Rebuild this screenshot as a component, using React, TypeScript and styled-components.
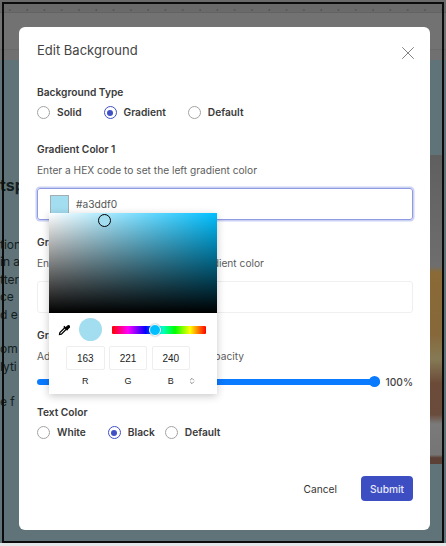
import styled, { createGlobalStyle } from 'styled-components'
import { X, ChevronsUpDown } from 'lucide-react'

const GlobalStyle = createGlobalStyle`
    html, body { margin: 0; padding: 0; }
    body { width: 446px; height: 546px; overflow: hidden; background: #e4e7e8; font-family: Inter, "Liberation Sans", sans-serif; }
`

const Page = styled.div`
    position: relative;
    width: 446px;
    height: 543px;
    overflow: hidden;
    display: flex;
    flex-direction: column;
    background: #5f7379;
`

const Outline = styled.div`
    position: absolute;
    inset: 2px 2px 0 2px;
    border: 2px solid #0c0c0c;
    pointer-events: none;
`

const HeaderTop = styled.div`
    height: 13px;
    box-sizing: border-box;
    background-color: #6a6a6a;
    background-image: radial-gradient(circle at 10px 10px, #565656 0.8px, transparent 1.2px);
    background-size: 17.3px 13px;
    border-bottom: 1px solid #636363;
`

const HeaderMiddle = styled.div`
    height: 37px;
    box-sizing: border-box;
    background: #727272;
    border-bottom: 1px solid #6a6a6a;
`

const HeaderBottom = styled.div`
    height: 10px;
    background: #707070;
`

const PageBody = styled.div`
    flex: 1;
    display: flex;
    justify-content: space-between;
`

const PageText = styled.div`
    width: 19px;
    overflow: hidden;
    padding-top: 116px;
    color: #14201f;
    font-size: 12px;
    line-height: 17.4px;
    white-space: nowrap;
`

const PageHeading = styled.div`
    font-size: 16px;
    font-weight: 700;
    line-height: 18px;
    margin-bottom: 42px;
`

const PageLine = styled.div<{ $gapAfter?: boolean }>`
    margin-bottom: ${({ $gapAfter }) => ($gapAfter ? '17.4px' : '0')};
`

const PagePhoto = styled.div`
    width: 13px;
    height: 309px;
    margin: 95px 3px 0 0;
    background: linear-gradient(
        180deg,
        #5f5f5f 0%,
        #6e6e6e 36%,
        #8a6a36 38%,
        #86683a 58%,
        #857a55 66%,
        #6b4a38 74%,
        #6a4c3c 84%,
        #7a7a7a 87%,
        #757575 97%,
        #5b4036 98%
    );
`

const Overlay = styled.div`
    position: absolute;
    inset: 0;
    padding: 27px 0 0 19px;
`

const Modal = styled.div`
    position: relative;
    width: 411px;
    height: 503px;
    box-sizing: border-box;
    background: #fff;
    border-radius: 6px;
    padding: 14px 17px 0 18px;
    color: #333;
`

const TitleRow = styled.div`
    display: flex;
    justify-content: space-between;
    align-items: flex-start;
    height: 18px;
    margin-bottom: 27px;
`

const Title = styled.h2`
    margin: 0;
    font-size: 13px;
    line-height: 18px;
    font-weight: 400;
    color: #444;
`

const CloseIcon = styled(X)`
    margin: 1px -6px 0 0;
    flex-shrink: 0;
`

const Section = styled.div<{ $after: number }>`
    margin-bottom: ${({ $after }) => $after}px;
`

const SectionLabel = styled.div`
    font-size: 10.2px;
    font-weight: 600;
    color: #3a3a3a;
    line-height: 12px;
`

const Hint = styled.div`
    font-size: 10.2px;
    color: #5c5c5c;
    line-height: 12px;
    margin-top: 9px;
`

const RadioRow = styled.div`
    display: flex;
    margin-top: 8px;
`

const RadioItem = styled.label<{ $after?: number }>`
    display: flex;
    align-items: center;
    gap: 7px;
    margin-right: ${({ $after }) => $after ?? 22}px;
    font-size: 10.2px;
    line-height: 13px;
    font-weight: 600;
    color: #3a3a3a;
`

const RadioDot = styled.span<{ $on?: boolean }>`
    width: 13px;
    height: 13px;
    box-sizing: border-box;
    border-radius: 50%;
    border: 1.25px solid ${({ $on }) => ($on ? '#3f51c5' : '#a3a3a3')};
    display: flex;
    align-items: center;
    justify-content: center;
    &::after {
        content: '';
        width: 6px;
        height: 6px;
        border-radius: 50%;
        background: ${({ $on }) => ($on ? '#3f51c5' : 'transparent')};
    }
`

const ColorInput = styled.div<{ $focus?: boolean }>`
    height: 32px;
    box-sizing: border-box;
    margin-top: 12px;
    border-radius: 3px;
    border: 1px solid ${({ $focus }) => ($focus ? '#8f9be0' : '#efefef')};
    box-shadow: ${({ $focus }) => ($focus ? '0 0 0 1.5px #ccd1f3' : 'none')};
    display: flex;
    align-items: center;
    padding-left: 12px;
    gap: 7px;
    font-size: 10.2px;
    color: #555;
`

const Swatch = styled.span`
    width: 19px;
    height: 19px;
    background: #a3ddf0;
    border: 1px solid #a2aeb2;
    box-sizing: border-box;
`

const SliderRow = styled.div`
    display: flex;
    align-items: center;
    gap: 6px;
    height: 13px;
    margin-top: 13px;
    font-size: 10.2px;
    font-weight: 500;
    color: #444;
`

const SliderTrack = styled.div`
    flex: 1;
    height: 6px;
    border-radius: 3px;
    background: #0a7aff;
    position: relative;
    &::after {
        content: '';
        position: absolute;
        right: 0;
        top: -2.5px;
        width: 11px;
        height: 11px;
        border-radius: 50%;
        background: #0a7aff;
    }
`

const Footer = styled.div`
    display: flex;
    justify-content: flex-end;
    align-items: center;
    gap: 24px;
    margin-top: 37px;
`

const CancelButton = styled.button`
    border: 0;
    background: none;
    padding: 0;
    font: 400 10.2px Inter, sans-serif;
    color: #333;
`

const SubmitButton = styled.button`
    width: 52px;
    height: 25px;
    padding: 0;
    border: 0;
    border-radius: 4px;
    background: #3d4ec2;
    color: #e8eafa;
    font: 500 10.2px Inter, sans-serif;
`

const Picker = styled.div`
    position: absolute;
    left: 30px;
    top: 186px;
    width: 168px;
    height: 181px;
    background: #fff;
    box-shadow: 0 2px 8px rgba(0, 0, 0, 0.22);
    font-family: "Liberation Sans", Arial, sans-serif;
`

const Saturation = styled.div`
    height: 100px;
    position: relative;
    background:
        linear-gradient(to top, #000, transparent),
        linear-gradient(to right, #fff, #00bfff);
`

const SatHandle = styled.span`
    position: absolute;
    left: 49px;
    top: 1px;
    width: 13px;
    height: 13px;
    box-sizing: border-box;
    border-radius: 50%;
    border: 1.5px solid #000;
    background: #a3ddf0;
`

const Controls = styled.div`
    display: flex;
    align-items: center;
    padding: 5px 11px 0 9px;
`

const Preview = styled.span`
    width: 23px;
    height: 23px;
    flex-shrink: 0;
    border-radius: 50%;
    background: #a3ddf0;
    margin: 0 10px 0 9px;
`

const Hue = styled.div`
    flex: 1;
    height: 8px;
    border-radius: 1px;
    position: relative;
    background: linear-gradient(to right, #f00, #f0f 17%, #00f 36%, #0ff 50%, #0f0 67%, #ff0 83%, #f00);
`

const HueHandle = styled.span`
    position: absolute;
    left: 37px;
    top: -2px;
    width: 12px;
    height: 12px;
    box-sizing: border-box;
    border-radius: 50%;
    border: 1px solid #fff;
    box-shadow: 0 0 2px rgba(0, 0, 0, 0.4);
    background: #00bfff;
`

const Fields = styled.div`
    display: grid;
    grid-template-columns: repeat(3, 38.5px);
    gap: 4.25px;
    padding: 5px 0 0 17px;
`

const Field = styled.div`
    height: 24px;
    box-sizing: border-box;
    border: 1px solid #eee;
    border-radius: 2px;
    display: flex;
    align-items: center;
    justify-content: center;
    font-size: 10px;
    color: #222;
`

const FieldLabels = styled(Fields)`
    grid-template-columns: repeat(3, 38.5px) 8px;
    align-items: center;
`

const FieldLabel = styled.div`
    font-size: 9px;
    line-height: 12px;
    color: #222;
    text-align: center;
`

const UnfoldIcon = styled(ChevronsUpDown)`
    margin-left: -6px;
`

const Eyedropper = () => (
    <svg width="12" height="12" viewBox="0 0 16 16" fill="none" stroke="#000" strokeWidth="1.6" style={{ flexShrink: 0 }}>
        <path d="M9 5 2.5 11.5 2 14l2.5-.5L11 7" fill="#fff" />
        <path d="M7.8 3.2l5 5" strokeWidth="2" />
        <path d="M10.5 5 13 2.5a1.4 1.4 0 0 1 2 2L12.5 7z" fill="#000" />
    </svg>
)

export default function App() {
    return (
        <>
            <GlobalStyle />
            <Page>
                <HeaderTop />
                <HeaderMiddle />
                <HeaderBottom />
                <PageBody>
                    <PageText>
                        <PageHeading>tsp</PageHeading>
                        <PageLine>tion</PageLine>
                        <PageLine>in a</PageLine>
                        <PageLine>tter</PageLine>
                        <PageLine>ce</PageLine>
                        <PageLine $gapAfter>d e</PageLine>
                        <PageLine>om</PageLine>
                        <PageLine $gapAfter>lyti</PageLine>
                        <PageLine>e f</PageLine>
                    </PageText>
                    <PagePhoto />
                </PageBody>
                <Overlay>
                    <Modal>
                        <TitleRow>
                            <Title>Edit Background</Title>
                            <CloseIcon size={22} color="#777" strokeWidth={1} />
                        </TitleRow>
                        <Section $after={24}>
                            <SectionLabel>Background Type</SectionLabel>
                            <RadioRow>
                                <RadioItem><RadioDot />Solid</RadioItem>
                                <RadioItem><RadioDot $on />Gradient</RadioItem>
                                <RadioItem><RadioDot />Default</RadioItem>
                            </RadioRow>
                        </Section>
                        <Section $after={16}>
                            <SectionLabel>Gradient Color 1</SectionLabel>
                            <Hint>Enter a HEX code to set the left gradient color</Hint>
                            <ColorInput $focus>
                                <Swatch />
                                #a3ddf0
                            </ColorInput>
                        </Section>
                        <Section $after={16}>
                            <SectionLabel>Gradient Color 2</SectionLabel>
                            <Hint>Enter a HEX code to set the right gradient color</Hint>
                            <ColorInput />
                        </Section>
                        <Section $after={18}>
                            <SectionLabel>Gradient Opacity</SectionLabel>
                            <Hint>Adjust the slider to set the gradient opacity</Hint>
                            <SliderRow>
                                <SliderTrack />
                                100%
                            </SliderRow>
                        </Section>
                        <Section $after={0}>
                            <SectionLabel>Text Color</SectionLabel>
                            <RadioRow>
                                <RadioItem><RadioDot />White</RadioItem>
                                <RadioItem $after={10}><RadioDot $on />Black</RadioItem>
                                <RadioItem><RadioDot />Default</RadioItem>
                            </RadioRow>
                        </Section>
                        <Footer>
                            <CancelButton>Cancel</CancelButton>
                            <SubmitButton>Submit</SubmitButton>
                        </Footer>
                        <Picker>
                            <Saturation>
                                <SatHandle />
                            </Saturation>
                            <Controls>
                                <Eyedropper />
                                <Preview />
                                <Hue>
                                    <HueHandle />
                                </Hue>
                            </Controls>
                            <Fields>
                                <Field>163</Field>
                                <Field>221</Field>
                                <Field>240</Field>
                            </Fields>
                            <FieldLabels>
                                <FieldLabel>R</FieldLabel>
                                <FieldLabel>G</FieldLabel>
                                <FieldLabel>B</FieldLabel>
                                <UnfoldIcon size={8} color="#555" strokeWidth={2} />
                            </FieldLabels>
                        </Picker>
                    </Modal>
                </Overlay>
                <Outline />
            </Page>
        </>
    )
}
